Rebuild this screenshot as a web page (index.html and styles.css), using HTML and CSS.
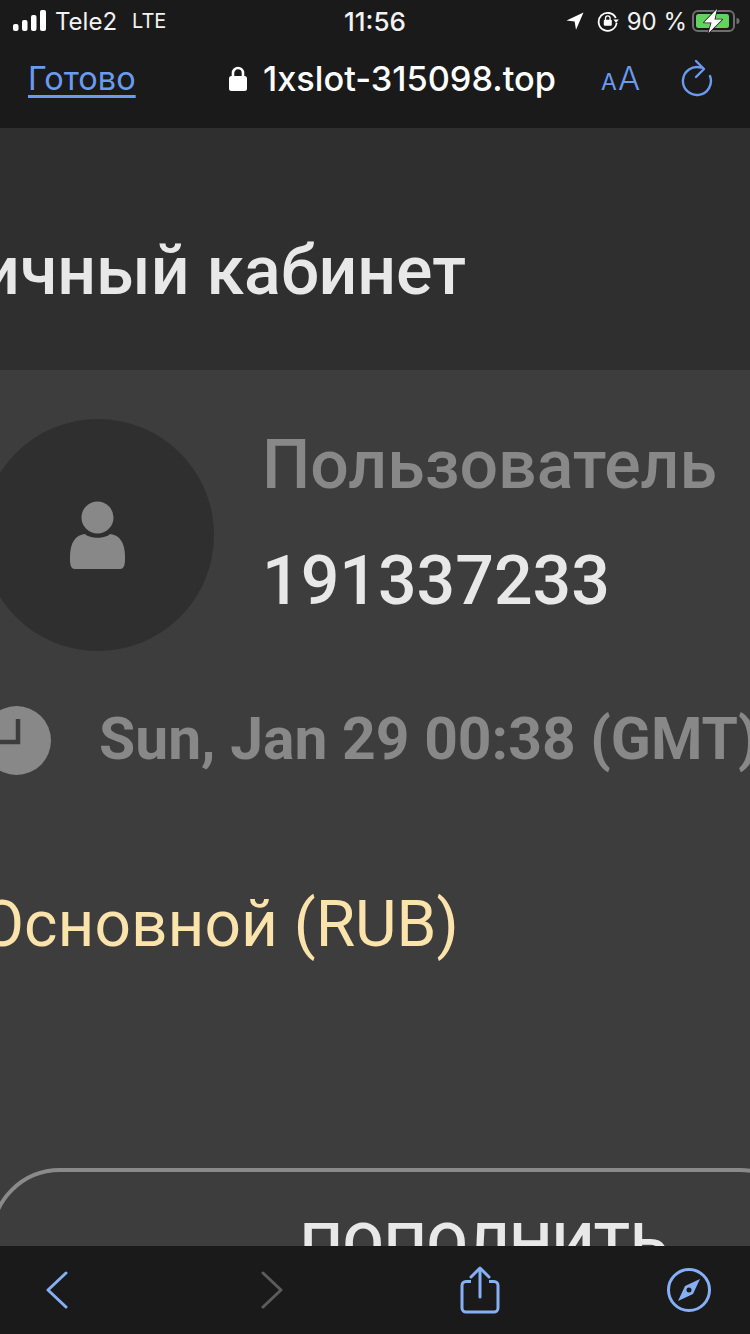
FILE: index.html
```html
<!DOCTYPE html>
<html lang="ru">
<head>
  <meta charset="UTF-8">
  <title>Личный кабинет</title>
  <link rel="stylesheet" href="styles.css">
</head>
<body>

<div class="phone">
  <header class="top-bar">
    <div class="status-bar">
      <div class="status-left">
        <svg class="signal" width="33" height="22" viewBox="0 0 33 22">
          <rect x="0" y="14" width="5.500" height="7" rx="2"/>
          <rect x="9" y="10" width="5.500" height="11" rx="2"/>
          <rect x="18" y="5" width="5.500" height="16" rx="2"/>
          <rect x="27" y="0" width="6" height="21" rx="2"/>
        </svg>
        <span>Tele2</span>
        <span class="net">LTE</span>
      </div>
      <div class="status-time">11:56</div>
      <div class="status-right">
        <svg width="18" height="18" viewBox="0 0 18 18">
          <path d="M17.5 0.5 L0.5 8.6 L8.6 9.6 L10 17.8 Z" fill="#fff"/>
        </svg>
        <svg width="22" height="22" viewBox="0 0 22 22" class="rotate-lock">
          <path d="M18.8 8 A9 9 0 1 0 19.6 13" fill="none" stroke="#fff" stroke-width="1.8"/>
          <path d="M16.4 9.6 L21.8 9.6 L19.1 13 Z" fill="#fff"/>
          <rect x="6.8" y="9.8" width="8" height="6" rx="1" fill="#fff"/>
          <path d="M8.5 10 V8.2 A2.3 2.3 0 0 1 13.1 8.2 V10" fill="none" stroke="#fff" stroke-width="1.3"/>
        </svg>
        <span class="percent">90 %</span>
        <svg class="battery" width="48" height="24" viewBox="0 0 48 24">
          <rect x="1" y="2" width="41" height="20" rx="5" fill="none" stroke="#6e6e6e" stroke-width="2"/>
          <rect x="4" y="5" width="33" height="14" rx="2.5" fill="#63d35f"/>
          <path d="M44.5 9 A3 3 0 0 1 44.5 15 Z" fill="#6e6e6e"/>
          <path d="M25 0 L12 13.5 H19.5 L16.5 24 L30 10.5 H22.5 Z" fill="#fff" stroke="#1a1a1a" stroke-width="1.6" stroke-linejoin="round" paint-order="stroke"/>
        </svg>
      </div>
    </div>
    <div class="url-bar">
      <a class="done" href="#">Готово</a>
      <div class="address">
        <svg width="18" height="25" viewBox="0 0 18 25">
          <path d="M4 11 V7 A5 5 0 0 1 14 7 V11" fill="none" stroke="#fff" stroke-width="2.6"/>
          <rect x="0" y="10" width="18" height="15" rx="2.5" fill="#fff"/>
        </svg>
        <span>1xslot-315098.top</span>
      </div>
      <div class="text-size"><small>A</small>A</div>
      <svg class="reload" width="32" height="38" viewBox="0 0 32 38">
        <path d="M20 8.600 A14 14 0 1 0 29 17" fill="none" stroke="#6b9bf0" stroke-width="2.4" stroke-linecap="round"/>
        <path d="M15 2 L23 10 L15 18" fill="none" stroke="#6b9bf0" stroke-width="2.4" stroke-linecap="round" stroke-linejoin="round"/>
      </svg>
    </div>
  </header>

  <main class="page">
    <section class="title-band">
      <h1>Личный кабинет</h1>
    </section>

    <section class="account">
      <div class="profile">
        <div class="avatar">
          <svg width="56" height="68" viewBox="0 0 56 68">
            <circle cx="27.500" cy="16.500" r="16" fill="#888"/>
            <path d="M0 56 C0 42 5 34 15 33 C20 38 35 38 40 33 C50 34 55 42 55 56 C55 62 55 68 50 68 H5 C0 68 0 62 0 56 Z" fill="#888"/>
          </svg>
        </div>
        <div class="user">
          <div class="user-label">Пользователь</div>
          <div class="user-id">191337233</div>
        </div>
      </div>

      <div class="last-login">
        <svg class="clock" width="69" height="69" viewBox="0 0 69 69">
          <circle cx="34.500" cy="34.500" r="34.500" fill="#888"/>
          <path d="M36 13 V36 H10" fill="none" stroke="#3d3d3d" stroke-width="4.500"/>
        </svg>
        <span class="login-time">Sun, Jan 29 00:38 (GMT)</span>
      </div>

      <div class="wallet">Основной (RUB)</div>

      <div class="deposit">ПОПОЛНИТЬ</div>
    </section>
  </main>

  <footer class="bottom-bar">
    <svg width="24" height="38" viewBox="0 0 24 38">
      <path d="M21 2 L3 19 L21 36" fill="none" stroke="#86b0f5" stroke-width="3" stroke-linecap="round" stroke-linejoin="round"/>
    </svg>
    <svg width="24" height="38" viewBox="0 0 24 38">
      <path d="M3 2 L21 19 L3 36" fill="none" stroke="#5c5c5c" stroke-width="3" stroke-linecap="round" stroke-linejoin="round"/>
    </svg>
    <svg width="40" height="48" viewBox="0 0 40 48">
      <path d="M11 15.500 H6 A4 4 0 0 0 2 19.500 V42 A4 4 0 0 0 6 46 H34 A4 4 0 0 0 38 42 V19.500 A4 4 0 0 0 34 15.500 H29" fill="none" stroke="#86b0f5" stroke-width="3"/>
      <path d="M20 3 V31" fill="none" stroke="#86b0f5" stroke-width="3" stroke-linecap="round"/>
      <path d="M11 11 L20 2 L29 11" fill="none" stroke="#86b0f5" stroke-width="3" stroke-linecap="round" stroke-linejoin="round"/>
    </svg>
    <svg width="44" height="44" viewBox="0 0 44 44">
      <circle cx="22" cy="22" r="20.500" fill="none" stroke="#86b0f5" stroke-width="3"/>
      <path d="M33 11 L18 18 L11 33 L26 26 Z M22 19.500 A2.500 2.500 0 1 0 22 24.500 A2.500 2.500 0 1 0 22 19.500 Z" fill="#86b0f5" fill-rule="evenodd"/>
    </svg>
  </footer>
</div>

</body>
</html>
```

FILE: styles.css
```css
* {
  box-sizing: border-box;
}

body {
  margin: 0;
  background: #1a1a1a;
  font-family: Inter, "Liberation Sans", sans-serif;
}

.phone {
  width: 750px;
  height: 1334px;
  display: flex;
  flex-direction: column;
  overflow: hidden;
}

/* top */

.top-bar {
  height: 128px;
  flex: none;
  background: #1a1a1a;
  color: #fff;
}

.status-bar {
  height: 40px;
  padding-top: 2px;
  display: grid;
  grid-template-columns: 1fr auto 1fr;
  align-items: center;
  font-size: 24px;
  color: #f2f2f2;
}

.status-left {
  display: flex;
  align-items: center;
  gap: 9px;
  padding-left: 13px;
}

.signal rect {
  fill: #fff;
}

.net {
  margin-left: 6px;
  font-size: 20px;
}

.status-time {
  font-size: 26px;
  font-weight: 500;
}

.status-right {
  display: flex;
  align-items: center;
  justify-content: flex-end;
  padding-right: 10px;
}

.rotate-lock {
  margin-left: 13px;
}

.percent {
  margin-left: 8px;
  white-space: nowrap;
}

.battery {
  margin-left: 5px;
}

.url-bar {
  height: 76px;
  display: flex;
  align-items: center;
}

.done {
  margin-left: 28px;
  width: 201px;
  flex: none;
  color: #6b9bf0;
  font-size: 32.500px;
  text-underline-offset: 5px;
}

.address {
  width: 372px;
  flex: none;
  display: flex;
  align-items: center;
  gap: 16px;
  font-size: 34.300px;
  font-weight: 500;
  white-space: nowrap;
}

.text-size {
  width: 80px;
  flex: none;
  color: #6b9bf0;
  font-size: 33px;
  font-weight: 300;
}

.text-size small {
  font-size: 23px;
  font-weight: 400;
  margin-right: 1px;
}

.reload {
  flex: none;
}

/* page */

.page {
  flex: 1;
  min-height: 0;
  overflow: hidden;
  background: #3d3d3d;
}

.title-band {
  height: 242px;
  padding-top: 108px;
  background: #2f2f2f;
}

.title-band h1 {
  margin: 0 0 0 -67px;
  color: #e8e8e8;
  font-family: Roboto, sans-serif;
  font-size: 68px;
  font-weight: 500;
  line-height: 70px;
  white-space: nowrap;
}

.account {
  padding-top: 49px;
  font-family: Roboto, sans-serif;
}

.profile {
  display: flex;
  margin-left: -18px;
}

.avatar {
  width: 232px;
  height: 232px;
  flex: none;
  border-radius: 50%;
  background: #2f2f2f;
  display: flex;
  align-items: center;
  justify-content: center;
}

.user {
  margin-left: 48px;
  padding-top: 8px;
  white-space: nowrap;
}

.user-label {
  color: #888;
  font-size: 68px;
  font-weight: 500;
  line-height: 76px;
}

.user-id {
  margin-top: 40px;
  color: #e8e8e8;
  font-size: 68px;
  font-weight: 500;
  line-height: 76px;
}

.last-login {
  margin: 55px 0 0 -18px;
  display: flex;
  align-items: center;
  gap: 48px;
  color: #888;
  font-size: 58.800px;
  font-weight: 700;
  line-height: 60px;
  white-space: nowrap;
}

.login-time {
  padding-bottom: 3px;
}

.clock {
  flex: none;
}

.wallet {
  margin: 115px 0 0 -20px;
  color: #fbe3ac;
  font-size: 64px;
  line-height: 70px;
  white-space: nowrap;
}

.deposit {
  margin: 208px -60px 0 -10px;
  height: 150px;
  padding: 35px 0 0 306px;
  border: 4px solid #8a8a8a;
  border-radius: 70px;
  color: #e8e8e8;
  font-size: 60px;
  font-weight: 500;
  line-height: 76px;
  white-space: nowrap;
}

/* bottom */

.bottom-bar {
  height: 88px;
  flex: none;
  background: #1a1a1a;
  display: grid;
  grid-template-columns: 215px 200px 207px 1fr;
  align-items: center;
  padding-left: 45px;
}
```
